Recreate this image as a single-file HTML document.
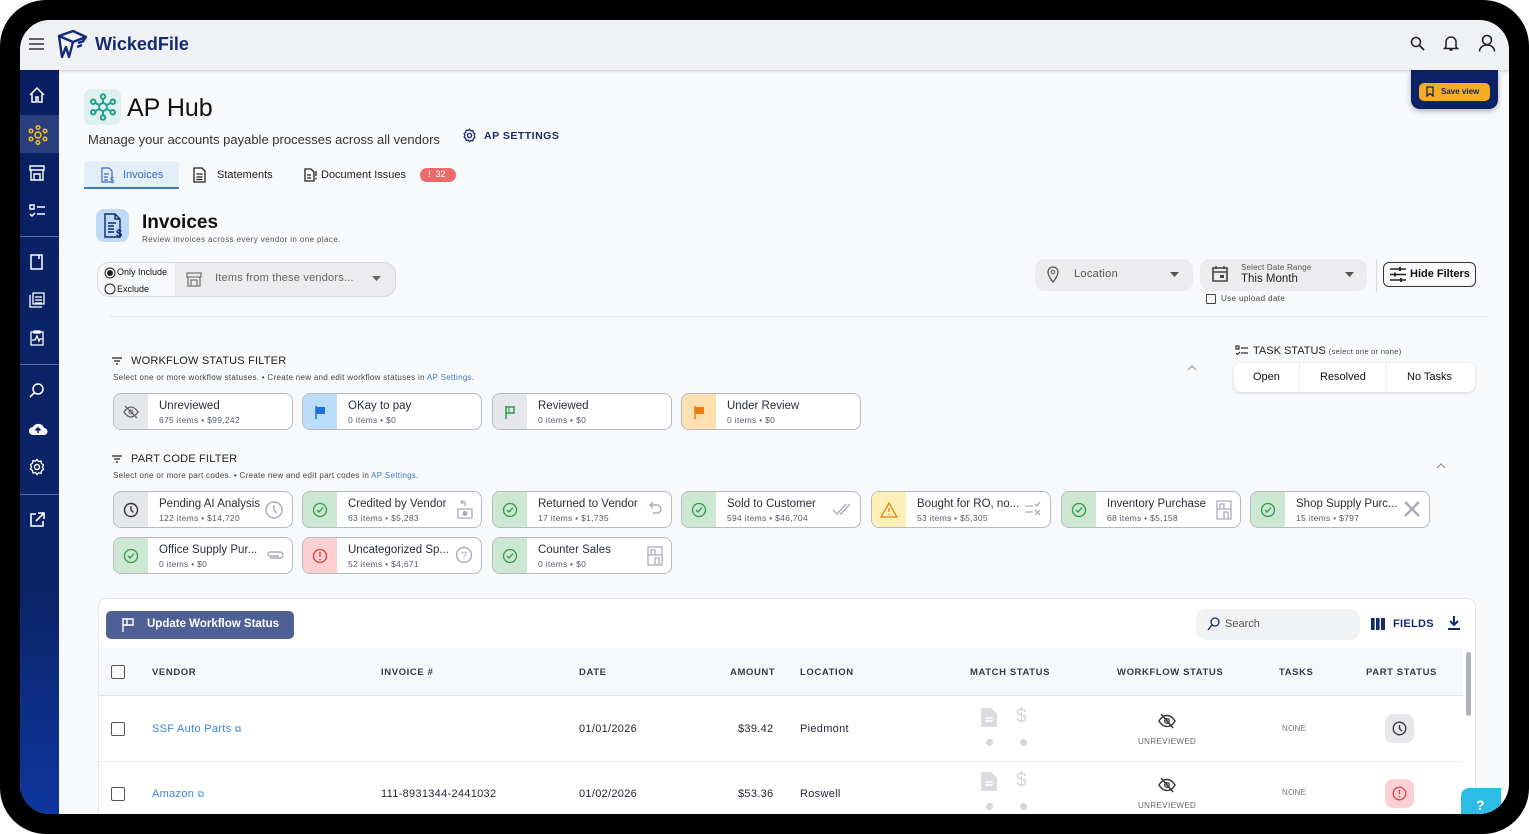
<!DOCTYPE html>
<html><head><meta charset="utf-8"><style>
*{box-sizing:border-box;margin:0;padding:0}
body{width:1529px;height:834px;overflow:hidden;background:#fff;font-family:"Liberation Sans",sans-serif;color:#1f2430;position:relative}
.frame{position:absolute;left:0;top:0;width:1529px;height:834px;background:#000;border-radius:46px}
.screen{position:absolute;left:20px;top:20px;width:1489px;height:794px;background:#f8f9fb;border-radius:30px 30px 30px 30px;overflow:hidden}
.a{position:absolute}
.hdr{left:0;top:0;width:1489px;height:50px;background:#f0f1f4;box-shadow:0 1px 3px rgba(0,0,0,.2);z-index:2}
.side{left:0;top:50px;width:39px;height:744px;background:linear-gradient(180deg,#0a1f63 0%,#0b2468 70%,#0e36a0 100%)}
.side svg{position:absolute;left:8px}
.sep{position:absolute;left:0;width:39px;height:1px;background:#5a6aa0}
.chip{position:absolute;width:180px;height:37px;border:1px solid #b5bac2;border-radius:8px;background:#fff;overflow:hidden}
.chip .ci{position:absolute;left:0;top:0;width:34px;height:100%;display:flex;align-items:center;justify-content:center}
.chip .t{position:absolute;left:45px;top:6px;font-size:11.5px;color:#2a2f3a;white-space:nowrap}
.chip .s{position:absolute;left:45px;top:21px;font-size:8.5px;color:#555b66;letter-spacing:.3px;white-space:nowrap}
.chip .r{position:absolute;right:8px;top:8px}
.th{position:absolute;top:667px;font-size:9.5px;font-weight:bold;letter-spacing:.6px;color:#333a48}
.td{position:absolute;font-size:11px;color:#1f2430;letter-spacing:.3px}
.cb{position:absolute;width:14px;height:14px;border:1.6px solid #555;border-radius:2px}
</style></head><body>
<div class="frame"></div>
<div class="screen">
 <div class="a hdr">
  <svg class="a" style="left:9px;top:18px" width="15" height="12"><path d="M0 1h15M0 6h15M0 11h15" stroke="#333" stroke-width="1.6"/></svg>
  <svg class="a" style="left:36px;top:9px" width="32" height="32" viewBox="0 0 32 32"><path d="M3 7 L17 2 L30 8 L17 13 Z M3 7 L6 28 L10 18 L13 28 L17 13 M30 8 L27 12 M22 14 L28 12 M21 18 L26 16" fill="none" stroke="#142a7a" stroke-width="2.4" stroke-linejoin="round"/></svg>
  <div class="a" style="left:75px;top:14px;font-size:18px;font-weight:bold;color:#142a6e">WickedFile</div>
  <svg class="a" style="left:1390px;top:16px" width="16" height="16"><circle cx="6" cy="6" r="4.5" fill="none" stroke="#222" stroke-width="1.6"/><path d="M9.5 9.5L14 14" stroke="#222" stroke-width="1.8"/></svg>
  <svg class="a" style="left:1423px;top:15px" width="16" height="17"><path d="M3 12V7a5 5 0 0110 0v5l1.5 1.5h-13Z M6.5 15h3" fill="none" stroke="#222" stroke-width="1.5"/></svg>
  <svg class="a" style="left:1458px;top:14px" width="18" height="18"><circle cx="9" cy="6" r="4.5" fill="none" stroke="#222" stroke-width="1.6"/><path d="M1.5 17.5c0-4 3.5-6.5 7.5-6.5s7.5 2.5 7.5 6.5" fill="none" stroke="#222" stroke-width="1.6"/></svg>
 </div>
 <div class="a side">
  <svg style="top:16px" width="18" height="18"><path d="M2 9L9 2l7 7M4 7v9h4v-5h2v5h4V7" fill="none" stroke="#fff" stroke-width="1.5"/></svg>
  <div class="a" style="left:0;top:45px;width:39px;height:38px;background:#2a3f7e"></div>
  <svg style="top:55px" width="20" height="20"><g fill="none" stroke="#f4c21b" stroke-width="1.5"><circle cx="10" cy="10" r="3"/><circle cx="10" cy="2.5" r="1.8"/><circle cx="10" cy="17.5" r="1.8"/><circle cx="3" cy="6" r="1.8"/><circle cx="17" cy="6" r="1.8"/><circle cx="3" cy="14" r="1.8"/><circle cx="17" cy="14" r="1.8"/></g></svg>
  <svg style="top:94px" width="18" height="18"><path d="M2 2h14v4H2zM3 6v10h12V6M6 10h6v6H6z" fill="none" stroke="#fff" stroke-width="1.4"/></svg>
  <svg style="top:132px" width="18" height="18"><path d="M2 3h4v4H2zM9 5h8M2 12l2 2 3-3M9 12h8" fill="none" stroke="#fff" stroke-width="1.4"/></svg>
  <div class="sep" style="top:166px"></div>
  <svg style="top:183px" width="18" height="18"><path d="M3 2h11v14H3z M11 2v4" fill="none" stroke="#fff" stroke-width="1.5"/></svg>
  <svg style="top:221px" width="18" height="18"><path d="M2 4v12h12M5 2h11v11H5zM7 6h7M7 9h7M7 12h7" fill="none" stroke="#fff" stroke-width="1.3"/></svg>
  <svg style="top:259px" width="18" height="18"><path d="M3 3h12v13H3zM6 2h6v2H6zM4 11h3l2-4 2 5 1-2h3" fill="none" stroke="#fff" stroke-width="1.3"/></svg>
  <div class="sep" style="top:294px"></div>
  <svg style="top:311px" width="18" height="18"><circle cx="10" cy="8" r="5" fill="none" stroke="#fff" stroke-width="1.5"/><path d="M6.5 11.5L2 16" stroke="#fff" stroke-width="1.6"/></svg>
  <svg style="top:350px" width="20" height="18"><path d="M5 15a4 4 0 010-8 6 6 0 0111 1 3.5 3.5 0 010 7z" fill="#fff"/><path d="M10 13V8M7.5 10.5L10 8l2.5 2.5" stroke="#0b2468" stroke-width="1.6" fill="none"/></svg>
  <svg style="top:388px" width="18" height="18"><circle cx="9" cy="9" r="2.5" fill="none" stroke="#fff" stroke-width="1.4"/><path d="M9 1.5l1.5 2 2.5-.5.5 2.5 2 1.5-1 2.2 1 2.2-2 1.5-.5 2.5-2.5-.5L9 16.5l-1.5-2-2.5.5-.5-2.5-2-1.5 1-2.2-1-2.2 2-1.5.5-2.5 2.5.5z" fill="none" stroke="#fff" stroke-width="1.3"/></svg>
  <div class="sep" style="top:424px"></div>
  <svg style="top:441px" width="18" height="18"><path d="M8 3H3v12h12v-5M10 2h6v6M16 2L8 10" fill="none" stroke="#fff" stroke-width="1.6"/></svg>
 </div>
 <!-- save view -->
 <div class="a" style="left:1391px;top:50px;width:87px;height:39px;background:#0b2266;border-radius:0 0 9px 9px;box-shadow:0 2px 6px rgba(0,0,0,.3)"></div>
 <div class="a" style="left:1399px;top:63px;width:71px;height:18px;background:#f6ad23;border-radius:5px;font-size:8px;font-weight:bold;color:#13235e;padding:4px 0 0 22px">Save view</div>
 <svg class="a" style="left:1406px;top:66px" width="8" height="11"><path d="M1 1h6v9L4 7.5 1 10z" fill="none" stroke="#13235e" stroke-width="1.3"/></svg>

 <!-- page header -->
 <div class="a" style="left:64px;top:69px;width:37px;height:36px;background:#dff1ee;border-radius:7px"></div>
 <svg class="a" style="left:68px;top:72px" width="30" height="30" viewBox="0 0 20 20"><g fill="none" stroke="#1f9d8e" stroke-width="1.3"><circle cx="10" cy="10" r="2.6"/><circle cx="10" cy="3" r="1.5"/><circle cx="10" cy="17" r="1.5"/><circle cx="3.5" cy="6.5" r="1.5"/><circle cx="16.5" cy="6.5" r="1.5"/><circle cx="3.5" cy="13.5" r="1.5"/><circle cx="16.5" cy="13.5" r="1.5"/><path d="M10 4.5v3M10 12.6v2.9M5 7.3l2.7 1.5M15 7.3l-2.7 1.5M5 12.7l2.7-1.5M15 12.7l-2.7-1.5"/></g></svg>
 <div class="a" style="left:107px;top:74px;font-size:25px;color:#111">AP Hub</div>
 <div class="a" style="left:68px;top:112px;font-size:13px;color:#333">Manage your accounts payable processes across all vendors</div>
 <svg class="a" style="left:442px;top:108px" width="15" height="15" viewBox="0 0 18 18"><circle cx="9" cy="9" r="2.5" fill="none" stroke="#142a6e" stroke-width="1.6"/><path d="M9 1.5l1.5 2 2.5-.5.5 2.5 2 1.5-1 2.2 1 2.2-2 1.5-.5 2.5-2.5-.5L9 16.5l-1.5-2-2.5.5-.5-2.5-2-1.5 1-2.2-1-2.2 2-1.5.5-2.5 2.5.5z" fill="none" stroke="#142a6e" stroke-width="1.5"/></svg>
 <div class="a" style="left:464px;top:110px;font-size:10.5px;font-weight:bold;color:#142a6e;letter-spacing:.5px">AP SETTINGS</div>
 <!-- tabs -->
 <div class="a" style="left:64px;top:141px;width:95px;height:28px;background:#e4eef9;border-bottom:2px solid #3a78c8;border-radius:4px 4px 0 0"></div>
 <svg class="a" style="left:80px;top:147px" width="16" height="17"><path d="M2 1h7l3 3v11H2z M4 7h5M4 10h4M4 13h4" fill="none" stroke="#3a6fc0" stroke-width="1.2"/><text x="10" y="16" font-size="8" fill="#3a6fc0" font-family="Liberation Sans">$</text></svg>
 <div class="a" style="left:103px;top:149px;font-size:11px;color:#3a6fc0">Invoices</div>
 <svg class="a" style="left:173px;top:147px" width="13" height="16"><path d="M1 1h8l3 3v11H1zM3.5 7h6M3.5 10h6M3.5 12.5h6" fill="none" stroke="#222" stroke-width="1.3"/></svg>
 <div class="a" style="left:197px;top:149px;font-size:11px;color:#222">Statements</div>
 <svg class="a" style="left:284px;top:148px" width="14" height="14"><path d="M1 1h6l3 3v9H1zM3 7h4M3 10h4M12 3v5M12 10v1.5" fill="none" stroke="#222" stroke-width="1.3"/></svg>
 <div class="a" style="left:301px;top:149px;font-size:11px;color:#222">Document Issues</div>
 <div class="a" style="left:400px;top:148px;width:36px;height:14px;background:#ec6a6a;border-radius:7px;font-size:9px;color:#fff;padding:1px 0 0 8px">!&nbsp;&nbsp;32</div>
 <!-- invoices section -->
 <div class="a" style="left:76px;top:189px;width:33px;height:33px;background:#bfdaf6;border-radius:8px"></div>
 <svg class="a" style="left:83px;top:193px" width="22" height="26"><path d="M2 1h10l5 5v18H2z M12 1v5h5 M5 10h8M5 13h6M5 16h6M5 19h6" fill="none" stroke="#142a6e" stroke-width="1.4"/><text x="13" y="24" font-size="11" font-weight="bold" fill="#142a6e" font-family="Liberation Sans">$</text></svg>
 <div class="a" style="left:122px;top:192px;font-size:19px;font-weight:bold;color:#111">Invoices</div>
 <div class="a" style="left:122px;top:215px;font-size:8px;color:#555;letter-spacing:.4px">Review invoices across every vendor in one place.</div>
 <!-- vendor filter -->
 <div class="a" style="left:77px;top:242px;width:299px;height:35px;background:#ececee;border:1px solid #d9dadd;border-radius:12px;overflow:hidden"><div style="position:absolute;left:0;top:0;width:77px;height:35px;background:#f7f8fa"></div></div>
 <svg class="a" style="left:84px;top:247px" width="12" height="12"><circle cx="6" cy="6" r="5" fill="none" stroke="#222"/><circle cx="6" cy="6" r="3" fill="#222"/></svg>
 <div class="a" style="left:97px;top:247px;font-size:9px;color:#111">Only Include</div>
 <svg class="a" style="left:84px;top:263px" width="12" height="12"><circle cx="6" cy="6" r="5" fill="none" stroke="#222"/></svg>
 <div class="a" style="left:97px;top:264px;font-size:9px;color:#111">Exclude</div>
 <svg class="a" style="left:166px;top:251px" width="16" height="16"><path d="M1 2h14v4H1zM2 6v9h12V6M5 9h6v6H5z" fill="none" stroke="#777" stroke-width="1.3"/></svg>
 <div class="a" style="left:195px;top:252px;font-size:11px;color:#666;letter-spacing:.2px">Items from these vendors...</div>
 <svg class="a" style="left:352px;top:256px" width="9" height="5"><path d="M0 0h9L4.5 5z" fill="#666"/></svg>
 <!-- location/date/hide -->
 <div class="a" style="left:1015px;top:239px;width:158px;height:32px;background:#ececee;border-radius:10px"></div>
 <svg class="a" style="left:1027px;top:246px" width="12" height="17"><path d="M6 16s-5-6-5-10a5 5 0 0110 0c0 4-5 10-5 10z" fill="none" stroke="#555" stroke-width="1.3"/><circle cx="6" cy="6" r="1.8" fill="none" stroke="#555"/></svg>
 <div class="a" style="left:1054px;top:248px;font-size:11px;color:#555;letter-spacing:.3px">Location</div>
 <svg class="a" style="left:1150px;top:252px" width="9" height="5"><path d="M0 0h9L4.5 5z" fill="#555"/></svg>
 <div class="a" style="left:1180px;top:239px;width:167px;height:32px;background:#ececee;border-radius:10px"></div>
 <svg class="a" style="left:1192px;top:245px" width="16" height="17"><path d="M1 3h14v13H1zM1 7h14M4 1v3M12 1v3" fill="none" stroke="#444" stroke-width="1.6"/><rect x="8" y="10" width="4" height="3" fill="#444"/></svg>
 <div class="a" style="left:1221px;top:243px;font-size:8px;color:#555;letter-spacing:.2px">Select Date Range</div>
 <div class="a" style="left:1221px;top:253px;font-size:11.5px;color:#222">This Month</div>
 <svg class="a" style="left:1325px;top:252px" width="9" height="5"><path d="M0 0h9L4.5 5z" fill="#555"/></svg>
 <div class="a" style="left:1186px;top:274px;width:10px;height:10px;border:1.2px solid #444;border-radius:1px"></div>
 <div class="a" style="left:1201px;top:274px;font-size:8px;color:#444;letter-spacing:.4px">Use upload date</div>
 <div class="a" style="left:1356px;top:239px;width:1px;height:33px;background:#d8d9dc"></div>
 <div class="a" style="left:1363px;top:242px;width:93px;height:25px;border:1px solid #333;border-radius:6px;font-size:11px;font-weight:bold;color:#111;padding:5px 0 0 26px">Hide Filters</div>
 <svg class="a" style="left:1370px;top:247px" width="16" height="15"><path d="M0 2h16M0 7.5h16M0 13h16" stroke="#222" stroke-width="1.5"/><path d="M10 0v4M5 5.5v4M11 11v4" stroke="#222" stroke-width="1.8"/></svg>
 <div class="a" style="left:90px;top:296px;width:1379px;height:1px;background:#e1e3e6"></div>
 <!-- workflow filter -->
 <svg class="a" style="left:92px;top:337px" width="10" height="8"><path d="M0 1h10M2 4h6M4 7h2" stroke="#222" stroke-width="1.3"/></svg>
 <div class="a" style="left:111px;top:335px;font-size:11px;color:#222;letter-spacing:.2px">WORKFLOW STATUS FILTER</div>
 <div class="a" style="left:93px;top:353px;font-size:8px;color:#444;letter-spacing:.3px">Select one or more workflow statuses. • Create new and edit workflow statuses in <span style="color:#3a78c8">AP Settings</span>.</div>
 <svg class="a" style="left:1167px;top:345px" width="10" height="6"><path d="M1 5l4-4 4 4" fill="none" stroke="#999" stroke-width="1.2"/></svg>
 <svg class="a" style="left:1215px;top:325px" width="13" height="11"><path d="M1 1h3v3H1zM6 3h7M1 8l1.5 1.5L5 7M6 8h7" fill="none" stroke="#333" stroke-width="1.2"/></svg>
 <div class="a" style="left:1233px;top:325px;font-size:11px;color:#222">TASK STATUS <span style="font-size:7.5px;color:#444;letter-spacing:.3px">(select one or none)</span></div>
 <div class="a" style="left:1214px;top:343px;width:241px;height:29px;background:#fff;border-radius:7px;box-shadow:0 1px 3px rgba(0,0,0,.15)">
  <div class="a" style="left:65px;top:0;width:1px;height:29px;background:#eee"></div>
  <div class="a" style="left:152px;top:0;width:1px;height:29px;background:#eee"></div>
  <div class="a" style="left:19px;top:8px;font-size:11px;color:#111">Open</div>
  <div class="a" style="left:86px;top:8px;font-size:11px;color:#111">Resolved</div>
  <div class="a" style="left:173px;top:8px;font-size:11px;color:#111">No Tasks</div>
 </div>
 <!-- workflow chips -->
 <div class="chip" style="left:93px;top:373px"><div class="ci" style="background:#e5e7eb"><svg width="16" height="14"><path d="M1 7s3-5 7-5 7 5 7 5-3 5-7 5-7-5-7-5z M2 1l12 12" fill="none" stroke="#666" stroke-width="1.3"/><circle cx="8" cy="7" r="2" fill="none" stroke="#666"/></svg></div><div class="t">Unreviewed</div><div class="s">675 items • $99,242</div></div>
 <div class="chip" style="left:282px;top:373px"><div class="ci" style="background:#bcdcfb"><svg width="12" height="14"><path d="M2 1v13" stroke="#1e6fe0" stroke-width="1.5"/><path d="M2 2h9v7H2z" fill="#1e6fe0"/></svg></div><div class="t">OKay to pay</div><div class="s">0 items • $0</div></div>
 <div class="chip" style="left:472px;top:373px"><div class="ci" style="background:#e5e7eb"><svg width="12" height="14"><path d="M2 1v13M2 2h8v6H2" fill="none" stroke="#2e9a4a" stroke-width="1.5"/><path d="M5 2v6" stroke="#2e9a4a"/></svg></div><div class="t">Reviewed</div><div class="s">0 items • $0</div></div>
 <div class="chip" style="left:661px;top:373px"><div class="ci" style="background:#fde0b0"><svg width="12" height="14"><path d="M2 1v13" stroke="#f07a10" stroke-width="1.5"/><path d="M2 2h9v7H2z" fill="#f07a10"/></svg></div><div class="t">Under Review</div><div class="s">0 items • $0</div></div>
 <!-- part code -->
 <svg class="a" style="left:92px;top:435px" width="10" height="8"><path d="M0 1h10M2 4h6M4 7h2" stroke="#222" stroke-width="1.3"/></svg>
 <div class="a" style="left:111px;top:433px;font-size:11px;color:#222;letter-spacing:.2px">PART CODE FILTER</div>
 <div class="a" style="left:93px;top:451px;font-size:8px;color:#444;letter-spacing:.3px">Select one or more part codes. • Create new and edit part codes in <span style="color:#3a78c8">AP Settings</span>.</div>
 <svg class="a" style="left:1416px;top:443px" width="10" height="6"><path d="M1 5l4-4 4 4" fill="none" stroke="#999" stroke-width="1.2"/></svg>

 <div class="chip" style="left:93px;top:471px"><div class="ci" style="background:#e5e7eb"><svg width="16" height="16"><circle cx="8" cy="8" r="6.5" fill="none" stroke="#333" stroke-width="1.4"/><path d="M8 4v4l2.5 2.5" fill="none" stroke="#333" stroke-width="1.4"/></svg></div><div class="t">Pending AI Analysis</div><div class="s">122 items • $14,720</div><svg class="r" width="20" height="20"><circle cx="10" cy="10" r="8" fill="none" stroke="#aab" stroke-width="1.4"/><path d="M10 5v5l3 3" fill="none" stroke="#aab" stroke-width="1.4"/></svg></div>
 <div class="chip" style="left:282px;top:471px"><div class="ci" style="background:#cce7d2"><svg width="16" height="16"><circle cx="8" cy="8" r="6.5" fill="none" stroke="#2e9a4a" stroke-width="1.3"/><path d="M5 8l2 2 4-4.5" fill="none" stroke="#2e9a4a" stroke-width="1.3"/></svg></div><div class="t">Credited by Vendor</div><div class="s">63 items • $5,283</div><svg class="r" width="16" height="20"><path d="M8 6V2H4M6 0L4 2l2 2M1 9h14v9H1z" fill="none" stroke="#aab" stroke-width="1.3"/><circle cx="8" cy="13.5" r="2.5" fill="#aab"/></svg></div>
 <div class="chip" style="left:472px;top:471px"><div class="ci" style="background:#cce7d2"><svg width="16" height="16"><circle cx="8" cy="8" r="6.5" fill="none" stroke="#2e9a4a" stroke-width="1.3"/><path d="M5 8l2 2 4-4.5" fill="none" stroke="#2e9a4a" stroke-width="1.3"/></svg></div><div class="t">Returned to Vendor</div><div class="s">17 items • $1,735</div><svg class="r" width="16" height="18"><path d="M3 5h7a4 4 0 010 8H6M6 2L3 5l3 3" fill="none" stroke="#aab" stroke-width="1.4"/></svg></div>
 <div class="chip" style="left:661px;top:471px"><div class="ci" style="background:#cce7d2"><svg width="16" height="16"><circle cx="8" cy="8" r="6.5" fill="none" stroke="#2e9a4a" stroke-width="1.3"/><path d="M5 8l2 2 4-4.5" fill="none" stroke="#2e9a4a" stroke-width="1.3"/></svg></div><div class="t">Sold to Customer</div><div class="s">594 items • $46,704</div><svg class="r" width="20" height="18"><path d="M1 10l4 4 9-10M8 13l1 1 9-10" fill="none" stroke="#aab" stroke-width="1.4"/></svg></div>
 <div class="chip" style="left:851px;top:471px"><div class="ci" style="background:#fdf0b8"><svg width="18" height="16"><path d="M9 1l8 14H1z M9 6v4M9 12v1" fill="none" stroke="#f07a10" stroke-width="1.3"/></svg></div><div class="t">Bought for RO, no...</div><div class="s">53 items • $5,305</div><svg class="r" width="18" height="18"><path d="M1 6h8M1 12h8M11 10l5 5M16 10l-5 5M11 4l2 2 3-4" fill="none" stroke="#aab" stroke-width="1.3"/></svg></div>
 <div class="chip" style="left:1041px;top:471px"><div class="ci" style="background:#cce7d2"><svg width="16" height="16"><circle cx="8" cy="8" r="6.5" fill="none" stroke="#2e9a4a" stroke-width="1.3"/><path d="M5 8l2 2 4-4.5" fill="none" stroke="#2e9a4a" stroke-width="1.3"/></svg></div><div class="t">Inventory Purchase</div><div class="s">68 items • $5,158</div><svg class="r" width="16" height="20"><path d="M1 1h14v18H1zM1 9h14M4 4h4v5H4zM8 12h4v7H8z" fill="none" stroke="#aab" stroke-width="1.3"/></svg></div>
 <div class="chip" style="left:1230px;top:471px"><div class="ci" style="background:#cce7d2"><svg width="16" height="16"><circle cx="8" cy="8" r="6.5" fill="none" stroke="#2e9a4a" stroke-width="1.3"/><path d="M5 8l2 2 4-4.5" fill="none" stroke="#2e9a4a" stroke-width="1.3"/></svg></div><div class="t">Shop Supply Purc...</div><div class="s">15 items • $797</div><svg class="r" width="18" height="18"><path d="M2 2l14 14M16 2L2 16" stroke="#aab" stroke-width="2.4"/></svg></div>

 <div class="chip" style="left:93px;top:517px"><div class="ci" style="background:#cce7d2"><svg width="16" height="16"><circle cx="8" cy="8" r="6.5" fill="none" stroke="#2e9a4a" stroke-width="1.3"/><path d="M5 8l2 2 4-4.5" fill="none" stroke="#2e9a4a" stroke-width="1.3"/></svg></div><div class="t">Office Supply Pur...</div><div class="s">0 items • $0</div><svg class="r" style="top:11px" width="18" height="12"><path d="M4 9h10a3 3 0 000-6H4a2 2 0 000 4h9" fill="none" stroke="#aab" stroke-width="1.4"/></svg></div>
 <div class="chip" style="left:282px;top:517px"><div class="ci" style="background:#fcd0d3"><svg width="16" height="16"><circle cx="8" cy="8" r="6.5" fill="none" stroke="#e03a3a" stroke-width="1.3"/><path d="M8 4v5M8 11v1.2" stroke="#e03a3a" stroke-width="1.4"/></svg></div><div class="t">Uncategorized Sp...</div><div class="s">52 items • $4,671</div><svg class="r" width="18" height="18"><circle cx="9" cy="9" r="7.5" fill="none" stroke="#aab" stroke-width="1.4"/><text x="6" y="13" font-size="11" fill="#aab" font-family="Liberation Sans">?</text></svg></div>
 <div class="chip" style="left:472px;top:517px"><div class="ci" style="background:#cce7d2"><svg width="16" height="16"><circle cx="8" cy="8" r="6.5" fill="none" stroke="#2e9a4a" stroke-width="1.3"/><path d="M5 8l2 2 4-4.5" fill="none" stroke="#2e9a4a" stroke-width="1.3"/></svg></div><div class="t">Counter Sales</div><div class="s">0 items • $0</div><svg class="r" width="16" height="20"><path d="M1 1h14v18H1zM1 9h14M4 4h4v5H4zM8 12h4v7H8z" fill="none" stroke="#aab" stroke-width="1.3"/></svg></div>

 <!-- table card -->
 <div class="a" style="left:78px;top:578px;width:1378px;height:230px;background:#fff;border:1px solid #e5e7ea;border-radius:8px"></div>
 <div class="a" style="left:86px;top:591px;width:188px;height:28px;background:#4f6194;border-radius:5px;font-size:11.5px;font-weight:bold;color:#fff;padding:7px 0 0 41px">Update Workflow Status</div>
 <svg class="a" style="left:101px;top:597px" width="14" height="15"><path d="M2 1v14M2 2h10v6H2M6 2v6" fill="none" stroke="#fff" stroke-width="1.4"/></svg>
 <div class="a" style="left:1176px;top:589px;width:164px;height:31px;background:#f1f2f4;border-radius:10px"></div>
 <svg class="a" style="left:1187px;top:597px" width="13" height="14"><circle cx="8" cy="5" r="4" fill="none" stroke="#142a6e" stroke-width="1.3"/><path d="M5 8L1 13" stroke="#142a6e" stroke-width="1.4"/></svg>
 <div class="a" style="left:1205px;top:598px;font-size:11px;color:#555">Search</div>
 <svg class="a" style="left:1351px;top:598px" width="14" height="12"><path d="M0 0h4v12H0zM5 0h4v12H5zM10 0h4v12h-4z" fill="#142a6e"/><path d="M4 0v12M9 0v12" stroke="#fff" stroke-width=".8"/></svg>
 <div class="a" style="left:1373px;top:598px;font-size:11px;font-weight:bold;color:#142a6e;letter-spacing:.3px">FIELDS</div>
 <svg class="a" style="left:1427px;top:595px" width="14" height="16"><path d="M7 1v9M3 6l4 4 4-4M1 14h12" fill="none" stroke="#142a6e" stroke-width="2"/></svg>
 <div class="a" style="left:79px;top:628px;width:1364px;height:48px;background:#f7f8fa;border-bottom:1px solid #e1e3e6"></div>
 <div class="a" style="left:1446px;top:632px;width:5px;height:64px;background:#b0b3b8;border-radius:3px"></div>
 <div class="cb" style="left:91px;top:645px"></div>
 <div class="th" style="left:132px;top:647px">VENDOR</div>
 <div class="th" style="left:361px;top:647px">INVOICE #</div>
 <div class="th" style="left:559px;top:647px">DATE</div>
 <div class="th" style="left:710px;top:647px">AMOUNT</div>
 <div class="th" style="left:780px;top:647px">LOCATION</div>
 <div class="th" style="left:950px;top:647px">MATCH STATUS</div>
 <div class="th" style="left:1097px;top:647px">WORKFLOW STATUS</div>
 <div class="th" style="left:1259px;top:647px">TASKS</div>
 <div class="th" style="left:1346px;top:647px">PART STATUS</div>

 <div class="a" style="left:79px;top:741px;width:1364px;height:1px;background:#eceef0"></div>
 <!-- row 1 -->
 <div class="cb" style="left:91px;top:702px"></div>
 <div class="td" style="left:132px;top:703px;color:#3a86e0">SSF Auto Parts <span style="font-size:9px">&#x29C9;</span></div>
 <div class="td" style="left:559px;top:703px">01/01/2026</div>
 <div class="td" style="left:718px;top:703px">$39.42</div>
 <div class="td" style="left:780px;top:703px">Piedmont</div>
 <svg class="a" style="left:961px;top:688px" width="16" height="19"><path d="M0 1a1 1 0 011-1h9l6 6v12a1 1 0 01-1 1H1a1 1 0 01-1-1z" fill="#d9dbdf"/><path d="M4 10h8M4 13h8" stroke="#fff" stroke-width="1.4"/></svg>
 <div class="a" style="left:996px;top:686px;font-size:19px;color:#d4d6da">$</div>
 <div class="a" style="left:966px;top:719px;width:7px;height:7px;border-radius:50%;background:#d4d6da"></div>
 <div class="a" style="left:1000px;top:719px;width:7px;height:7px;border-radius:50%;background:#d4d6da"></div>
 <svg class="a" style="left:1138px;top:693px" width="18" height="16"><path d="M1 8s3-5.5 8-5.5 8 5.5 8 5.5-3 5.5-8 5.5-8-5.5-8-5.5zM3 1l12 14" fill="none" stroke="#333" stroke-width="1.4"/><circle cx="9" cy="8" r="2.3" fill="none" stroke="#333" stroke-width="1.3"/></svg>
 <div class="a" style="left:1118px;top:717px;font-size:8px;color:#666;letter-spacing:.4px">UNREVIEWED</div>
 <div class="a" style="left:1262px;top:704px;font-size:8px;color:#777;letter-spacing:.3px">NONE</div>
 <div class="a" style="left:1365px;top:694px;width:29px;height:29px;border-radius:8px;background:#e5e7eb"></div>
 <svg class="a" style="left:1372px;top:701px" width="15" height="15"><circle cx="7.5" cy="7.5" r="6.3" fill="none" stroke="#333" stroke-width="1.3"/><path d="M7.5 4v3.7l2.3 2.3" fill="none" stroke="#333" stroke-width="1.3"/></svg>
 <!-- row 2 -->
 <div class="cb" style="left:91px;top:767px"></div>
 <div class="td" style="left:132px;top:768px;color:#3a86e0">Amazon <span style="font-size:9px">&#x29C9;</span></div>
 <div class="td" style="left:361px;top:768px">111-8931344-2441032</div>
 <div class="td" style="left:559px;top:768px">01/02/2026</div>
 <div class="td" style="left:718px;top:768px">$53.36</div>
 <div class="td" style="left:780px;top:768px">Roswell</div>
 <svg class="a" style="left:961px;top:752px" width="16" height="19"><path d="M0 1a1 1 0 011-1h9l6 6v12a1 1 0 01-1 1H1a1 1 0 01-1-1z" fill="#d9dbdf"/><path d="M4 10h8M4 13h8" stroke="#fff" stroke-width="1.4"/></svg>
 <div class="a" style="left:996px;top:750px;font-size:19px;color:#d4d6da">$</div>
 <div class="a" style="left:966px;top:783px;width:7px;height:7px;border-radius:50%;background:#d4d6da"></div>
 <div class="a" style="left:1000px;top:783px;width:7px;height:7px;border-radius:50%;background:#d4d6da"></div>
 <svg class="a" style="left:1138px;top:757px" width="18" height="16"><path d="M1 8s3-5.5 8-5.5 8 5.5 8 5.5-3 5.5-8 5.5-8-5.5-8-5.5zM3 1l12 14" fill="none" stroke="#333" stroke-width="1.4"/><circle cx="9" cy="8" r="2.3" fill="none" stroke="#333" stroke-width="1.3"/></svg>
 <div class="a" style="left:1118px;top:781px;font-size:8px;color:#666;letter-spacing:.4px">UNREVIEWED</div>
 <div class="a" style="left:1262px;top:768px;font-size:8px;color:#777;letter-spacing:.3px">NONE</div>
 <div class="a" style="left:1365px;top:759px;width:29px;height:29px;border-radius:8px;background:#fcd0d3"></div>
 <svg class="a" style="left:1372px;top:766px" width="15" height="15"><circle cx="7.5" cy="7.5" r="6.3" fill="none" stroke="#e03a3a" stroke-width="1.2"/><path d="M7.5 4v4.3M7.5 10v1.2" stroke="#e03a3a" stroke-width="1.3"/></svg>
 <div class="a" style="left:1441px;top:768px;width:40px;height:30px;background:#2bbde6;border-radius:8px 0 0 0;font-size:14px;font-weight:bold;color:#fff;padding:9px 0 0 15px">?</div>
</div>
</body></html>
